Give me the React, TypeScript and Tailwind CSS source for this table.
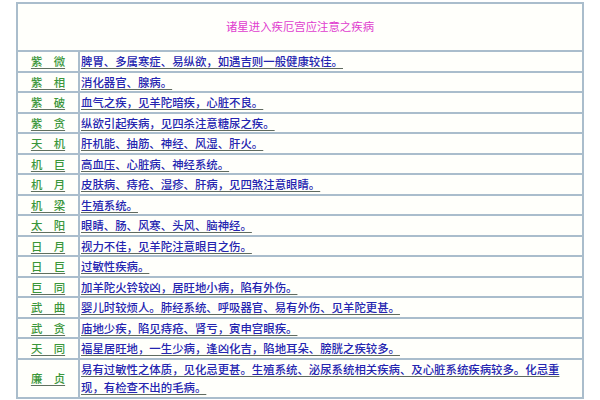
import React from 'react'

const rows = [
  { star: '紫　微', text: '脾胃、多属寒症、易纵欲，如遇吉则一般健康较佳。' },
  { star: '紫　相', text: '消化器官、腺病。' },
  { star: '紫　破', text: '血气之疾，见羊陀暗疾，心脏不良。' },
  { star: '紫　贪', text: '纵欲引起疾病，见四杀注意糖尿之疾。' },
  { star: '天　机', text: '肝机能、抽筋、神经、风湿、肝火。' },
  { star: '机　巨', text: '高血压、心脏病、神经系统。' },
  { star: '机　月', text: '皮肤病、痔疮、湿疹、肝病，见四煞注意眼睛。' },
  { star: '机　梁', text: '生殖系统。' },
  { star: '太　阳', text: '眼睛、肠、风寒、头风、脑神经。' },
  { star: '日　月', text: '视力不佳，见羊陀注意眼目之伤。' },
  { star: '日　巨', text: '过敏性疾病。' },
  { star: '巨　同', text: '加羊陀火铃较凶，居旺地小病，陷有外伤。' },
  { star: '武　曲', text: '婴儿时较烦人。肺经系统、呼吸器官、易有外伤、见羊陀更甚。' },
  { star: '武　贪', text: '庙地少疾，陷见痔疮、肾亏，寅申宫眼疾。' },
  { star: '天　同', text: '福星居旺地，一生少病，逢凶化吉，陷地耳朵、膀胱之疾较多。' },
  {
    star: '廉　贞',
    text: '易有过敏性之体质，见化忌更甚。生殖系统、泌尿系统相关疾病、及心脏系统疾病较多。化忌重现，有检查不出的毛病。',
  },
]

export default function App() {
  return (
    <div
      className="w-[600px] h-[400px] overflow-hidden bg-white pt-[2px] pl-[16px]"
      style={{ fontFamily: '"Noto Sans CJK SC", "Noto Sans", sans-serif' }}
    >
      <table className="w-[568px] border-separate border-spacing-0 border border-[#aabdcc] text-[11.4px] table-fixed">
        <colgroup>
          <col className="w-[62px]" />
          <col />
        </colgroup>
        <tbody>
          <tr>
            <td
              colSpan={2}
              className="h-[48px] border border-[#aabdcc] bg-[#fffffb] text-center align-middle text-[#e03ccf]"
            >
              诸星进入疾厄宫应注意之疾病
            </td>
          </tr>
          {rows.map((r) => (
            <tr key={r.star}>
              <td className="border border-[#aabdcc] bg-[#fffffb] p-0 text-center align-middle leading-[18.5px]">
                <span className="font-medium text-[#3a963a] underline decoration-[#5f6f5f] underline-offset-2">{r.star}</span>
              </td>
              <td className="border border-[#aabdcc] bg-[#fffffb] py-0 pl-[1px] pr-1 align-middle leading-[18.5px]">
                <span className="font-medium text-[#2424b0] underline decoration-[#5f6a5f] underline-offset-2">{r.text}</span>
              </td>
            </tr>
          ))}
        </tbody>
      </table>
    </div>
  )
}
